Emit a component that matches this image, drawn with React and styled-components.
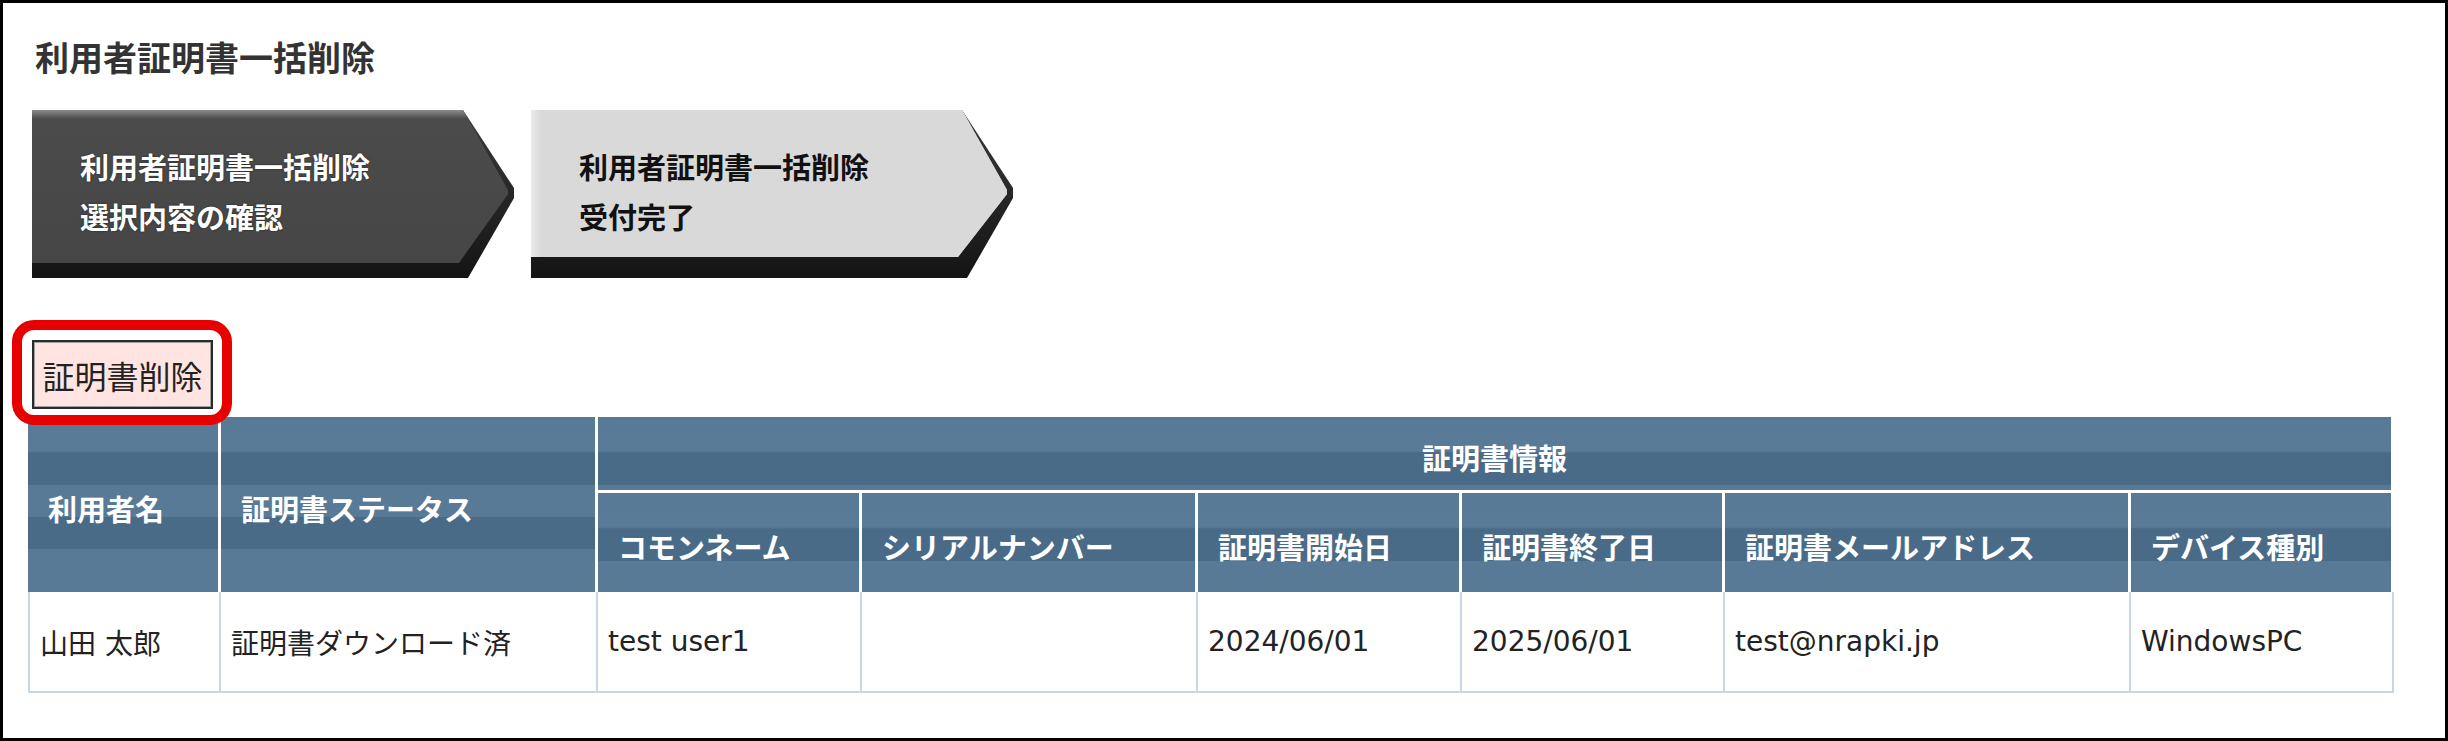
import React from 'react';
import styled, { createGlobalStyle, css } from 'styled-components';

const GlobalStyle = createGlobalStyle`
  html, body {
    margin: 0;
    padding: 0;
    background: #fff;
  }
  body {
    font-family: "DejaVu Sans", "Noto Sans CJK JP", sans-serif;
  }
`;

const Page = styled.div`
  box-sizing: border-box;
  width: 2448px;
  height: 741px;
  border: 3px solid #000;
  padding: 33px 0 0 25px;
  display: flex;
  flex-direction: column;
  align-items: flex-start;
`;

const Title = styled.h1`
  margin: 0 0 0 7px;
  font-family: "Noto Sans CJK JP", sans-serif;
  font-size: 34px;
  line-height: 41px;
  font-weight: 700;
  color: #333;
`;

const Steps = styled.div`
  display: flex;
  gap: 17px;
  margin: 33px 0 0 4px;
`;

const stepTheme = {
  dark: {
    face: 'linear-gradient(to bottom, #8c8c8c 0, #4b4b4b 9px, #464646 calc(100% - 8px), #363636 100%)',
    text: '#fff',
    shadow: '0 0 2px rgba(0,0,0,0.6)',
    faceBottom: 153,
  },
  light: {
    face: 'linear-gradient(to right, #ececec 0, #d9d9d9 10px), linear-gradient(to bottom, #f2f2f2 0, #d9d9d9 9px, #d8d8d8 calc(100% - 8px), #a8a8a8 100%)',
    text: '#111',
    shadow: 'none',
    faceBottom: 147,
  },
};

const Step = styled.div`
  position: relative;
  box-sizing: border-box;
  width: 482px;
  height: 168px;
  padding: 31px 0 0 48px;
  background: linear-gradient(to bottom, #3a3a3a 0, #141414 100%);
  clip-path: polygon(0 0, 431px 0, 482px 78px, 482px 88px, 436px 168px, 0 168px);

  &::before {
    content: '';
    position: absolute;
    inset: 0;
    background: ${({ $variant }) => stepTheme[$variant].face};
    ${({ $variant }) => {
      const b = stepTheme[$variant].faceBottom;
      return css`
        clip-path: polygon(0 0, 431px 0, 476px 80px, 476px 84px, 427px ${b}px, 0 ${b}px);
      `;
    }}
  }
`;

const StepLabel = styled.div`
  position: relative;
  font-family: "Noto Sans CJK JP", sans-serif;
  font-size: 29px;
  line-height: 50px;
  font-weight: 700;
  color: ${({ $variant }) => stepTheme[$variant].text};
  text-shadow: ${({ $variant }) => stepTheme[$variant].shadow};
  white-space: nowrap;
`;

const ActionBar = styled.div`
  position: relative;
  margin: 62px 0 0 4px;
`;

const DeleteButton = styled.button`
  box-sizing: border-box;
  width: 181px;
  height: 69px;
  padding: 0;
  border: 2px solid #2a2a2a;
  box-shadow: inset 0 0 0 1px #a0a0a0;
  background: #ffe4e1;
  font-family: "Noto Sans CJK JP", sans-serif;
  font-size: 32px;
  color: #222;
  cursor: pointer;
`;

const Highlight = styled.span`
  position: absolute;
  top: -20px;
  left: -20px;
  right: -19px;
  bottom: -16px;
  border: 10px solid #e60000;
  border-radius: 22px;
  pointer-events: none;
  z-index: 2;
`;

const Table = styled.table`
  margin: 8px 0 0 0;
  width: 2366px;
  table-layout: fixed;
  border-collapse: separate;
  border-spacing: 0;
`;

const stripe = '#587a96';
const band = '#4a6b88';

const Th = styled.th`
  box-sizing: border-box;
  height: ${({ $h }) => $h}px;
  padding: 6px 20px 0;
  text-align: ${({ $center }) => ($center ? 'center' : 'left')};
  vertical-align: middle;
  font-size: 29px;
  font-weight: 700;
  color: #fff;
  white-space: nowrap;
  border-right: 3px solid #fff;
  border-bottom: ${({ $split }) => ($split ? '3px solid #fff' : '0')};
  background: linear-gradient(
    to bottom,
    ${stripe} 0, #5a7b97 34px, ${band} 36px, ${band} 68px,
    ${stripe} 68px, ${stripe} 100px, ${band} 100px, ${band} 132px,
    ${stripe} 132px
  );
`;

const Td = styled.td`
  box-sizing: border-box;
  height: 101px;
  padding: 0 10px;
  vertical-align: middle;
  font-size: 28px;
  color: #222;
  white-space: nowrap;
  border-right: 2px solid #c9d6e3;
  border-bottom: 2px solid #c9d6e3;
  &:first-child {
    border-left: 2px solid #c9d6e3;
  }
`;

const columns = [193, 377, 264, 336, 264, 263, 406, 263];

const subHeaders = [
  'コモンネーム',
  'シリアルナンバー',
  '証明書開始日',
  '証明書終了日',
  '証明書メールアドレス',
  'デバイス種別',
];

const rows = [
  ['山田 太郎', '証明書ダウンロード済', 'test user1', '', '2024/06/01', '2025/06/01', 'test@nrapki.jp', 'WindowsPC'],
];

const steps = [
  { variant: 'dark', lines: ['利用者証明書一括削除', '選択内容の確認'] },
  { variant: 'light', lines: ['利用者証明書一括削除', '受付完了'] },
];

export default function App() {
  return (
    <>
      <GlobalStyle />
      <Page>
        <Title>利用者証明書一括削除</Title>

        <Steps>
          {steps.map((s, i) => (
            <Step key={i} $variant={s.variant}>
              <StepLabel $variant={s.variant}>
                {s.lines.map((l) => (
                  <div key={l}>{l}</div>
                ))}
              </StepLabel>
            </Step>
          ))}
        </Steps>

        <ActionBar>
          <DeleteButton type="button">証明書削除</DeleteButton>
          <Highlight />
        </ActionBar>

        <Table>
          <colgroup>
            {columns.map((w, i) => (
              <col key={i} style={{ width: w }} />
            ))}
          </colgroup>
          <thead>
            <tr>
              <Th rowSpan={2} $h={175}>利用者名</Th>
              <Th rowSpan={2} $h={175}>証明書ステータス</Th>
              <Th colSpan={6} $h={76} $split $center>証明書情報</Th>
            </tr>
            <tr>
              {subHeaders.map((h) => (
                <Th key={h} $h={99}>{h}</Th>
              ))}
            </tr>
          </thead>
          <tbody>
            {rows.map((r, i) => (
              <tr key={i}>
                {r.map((c, j) => (
                  <Td key={j}>{c}</Td>
                ))}
              </tr>
            ))}
          </tbody>
        </Table>
      </Page>
    </>
  );
}
